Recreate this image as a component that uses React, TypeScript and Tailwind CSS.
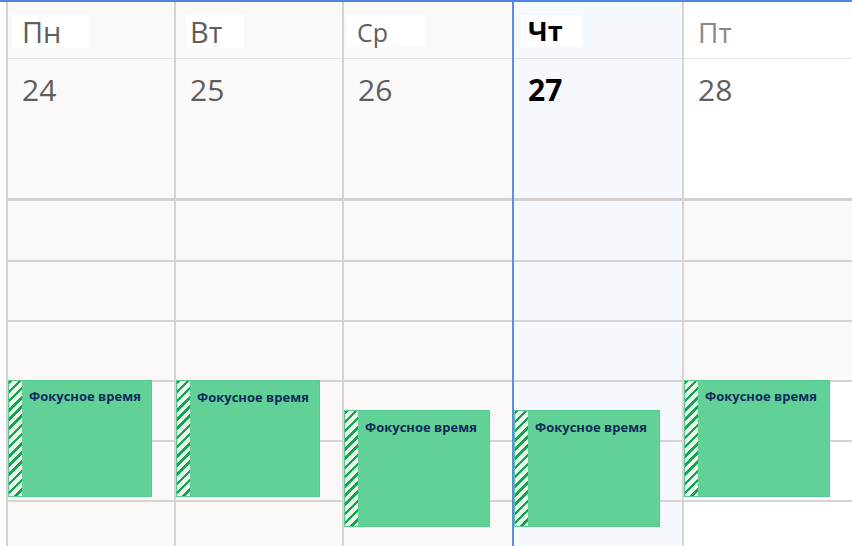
import React from "react";

type Day = {
  name: string;
  date: string;
  today?: boolean;
  colW: string;
  headBg: string;
  bodyBg: string;
  lowBg: string;
  box: string;
  label: string;
  event: { pos: string; pad: string };
};

const days: Day[] = [
  {
    name: "Пн",
    date: "24",
    colW: "w-[168px]",
    headBg: "bg-[#faf9f8]",
    bodyBg: "bg-[#faf9f8]",
    lowBg: "bg-[#faf9f8]",
    box: "ml-[4px] mt-[13px] w-[78px] h-[33px] pl-[10px] pt-[2px]",
    label: "text-[29px] text-[#605e5c]",
    event: { pos: "left-0 top-[378px] w-[144px]", pad: "pt-[9px]" },
  },
  {
    name: "Вт",
    date: "25",
    colW: "w-[168px]",
    headBg: "bg-[#faf9f8]",
    bodyBg: "bg-[#faf9f8]",
    lowBg: "bg-[#faf9f8]",
    box: "ml-[10px] mt-[12px] w-[58px] h-[34px] pl-[4px] pt-[3px]",
    label: "text-[29px] text-[#605e5c]",
    event: { pos: "left-0 top-[378px] w-[144px]", pad: "pt-[10px]" },
  },
  {
    name: "Ср",
    date: "26",
    colW: "w-[170px]",
    headBg: "bg-[#faf9f8]",
    bodyBg: "bg-[#faf9f8]",
    lowBg: "bg-[#faf9f8]",
    box: "ml-[3px] mt-[13px] w-[79px] h-[32px] pl-[10px] pt-[5px]",
    label: "text-[25px] text-[#605e5c]",
    event: { pos: "left-0 top-[408px] w-[146px]", pad: "pt-[10px]" },
  },
  {
    name: "Чт",
    date: "27",
    today: true,
    colW: "w-[170px]",
    headBg: "bg-[#f5f9fe]",
    bodyBg: "bg-[#f5f9fe]",
    lowBg: "bg-[#f5f9fe]",
    box: "ml-[7px] mt-[13px] w-[61px] h-[32px] pl-[7px] pt-[2px]",
    label: "text-[27px] font-bold text-black",
    event: { pos: "left-0 top-[408px] w-[146px]", pad: "pt-[10px]" },
  },
  {
    name: "Пт",
    date: "28",
    colW: "w-[170px]",
    headBg: "bg-white",
    bodyBg: "bg-[#faf9f8]",
    lowBg: "bg-white",
    box: "ml-[0px] mt-[13px] w-[60px] h-[32px] pl-[14px] pt-[3px]",
    label: "text-[28px] text-[#8a8886]",
    event: { pos: "left-0 top-[378px] w-[146px]", pad: "pt-[9px]" },
  },
];

function FocusEvent({ pos, pad }: { pos: string; pad: string }) {
  return (
    <div className={`absolute ${pos} flex h-[117px] border border-[#55cb8e] bg-[#62d197]`}>
      <div className="w-[13px] shrink-0 bg-[repeating-linear-gradient(135deg,#17a34c_0px,#17a34c_2.5px,#e8f8ee_2.5px,#e8f8ee_6.5px)]" />
      <div className={`pl-[7px] ${pad} text-[13px] font-bold leading-none text-[#0f2a5c]`}>
        Фокусное время
      </div>
    </div>
  );
}

function DayColumn({ day }: { day: Day }) {
  const line = day.today ? "border-[#5b8ee0]" : "border-[#d6d4d2]";
  return (
    <div className={`relative flex shrink-0 flex-col border-l-2 ${line} ${day.colW}`}>
      {/* header */}
      <div className={`flex h-[199px] flex-col border-b-[3px] border-[#d2d0ce] ${day.headBg}`}>
        <div className="h-[57px] border-b border-[#e6e4e2]">
          <div className={`bg-white leading-none ${day.box}`}>
            <span className={day.label}>{day.name}</span>
          </div>
        </div>
        <div
          className={`pl-[14px] pt-[16px] text-[30px] leading-none ${
            day.today ? "font-bold text-black" : "text-[#605e5c]"
          }`}
        >
          {day.date}
        </div>
      </div>

      {/* hour rows */}
      <div className={`h-[59px] ${day.bodyBg}`} />
      <div className={`h-[60px] border-t-2 border-[#d6d4d2] ${day.bodyBg}`} />
      <div className={`h-[60px] border-t-2 border-[#d6d4d2] ${day.bodyBg}`} />
      <div className={`h-[60px] border-t-2 border-[#d6d4d2] ${day.lowBg}`} />
      <div className={`h-[60px] border-t-2 border-[#d6d4d2] ${day.lowBg}`} />
      <div className={`h-[60px] border-t-2 border-[#d6d4d2] ${day.lowBg}`} />

      <FocusEvent {...day.event} />
    </div>
  );
}

export default function App() {
  return (
    <div className="h-[546px] w-[852px] overflow-hidden border-t-2 border-[#4a86e0] bg-white font-['Open_Sans',sans-serif]">
      <div className="flex">
        <div className="w-[6px] shrink-0 bg-white" />
        {days.map((d) => (
          <DayColumn key={d.name} day={d} />
        ))}
      </div>
    </div>
  );
}
